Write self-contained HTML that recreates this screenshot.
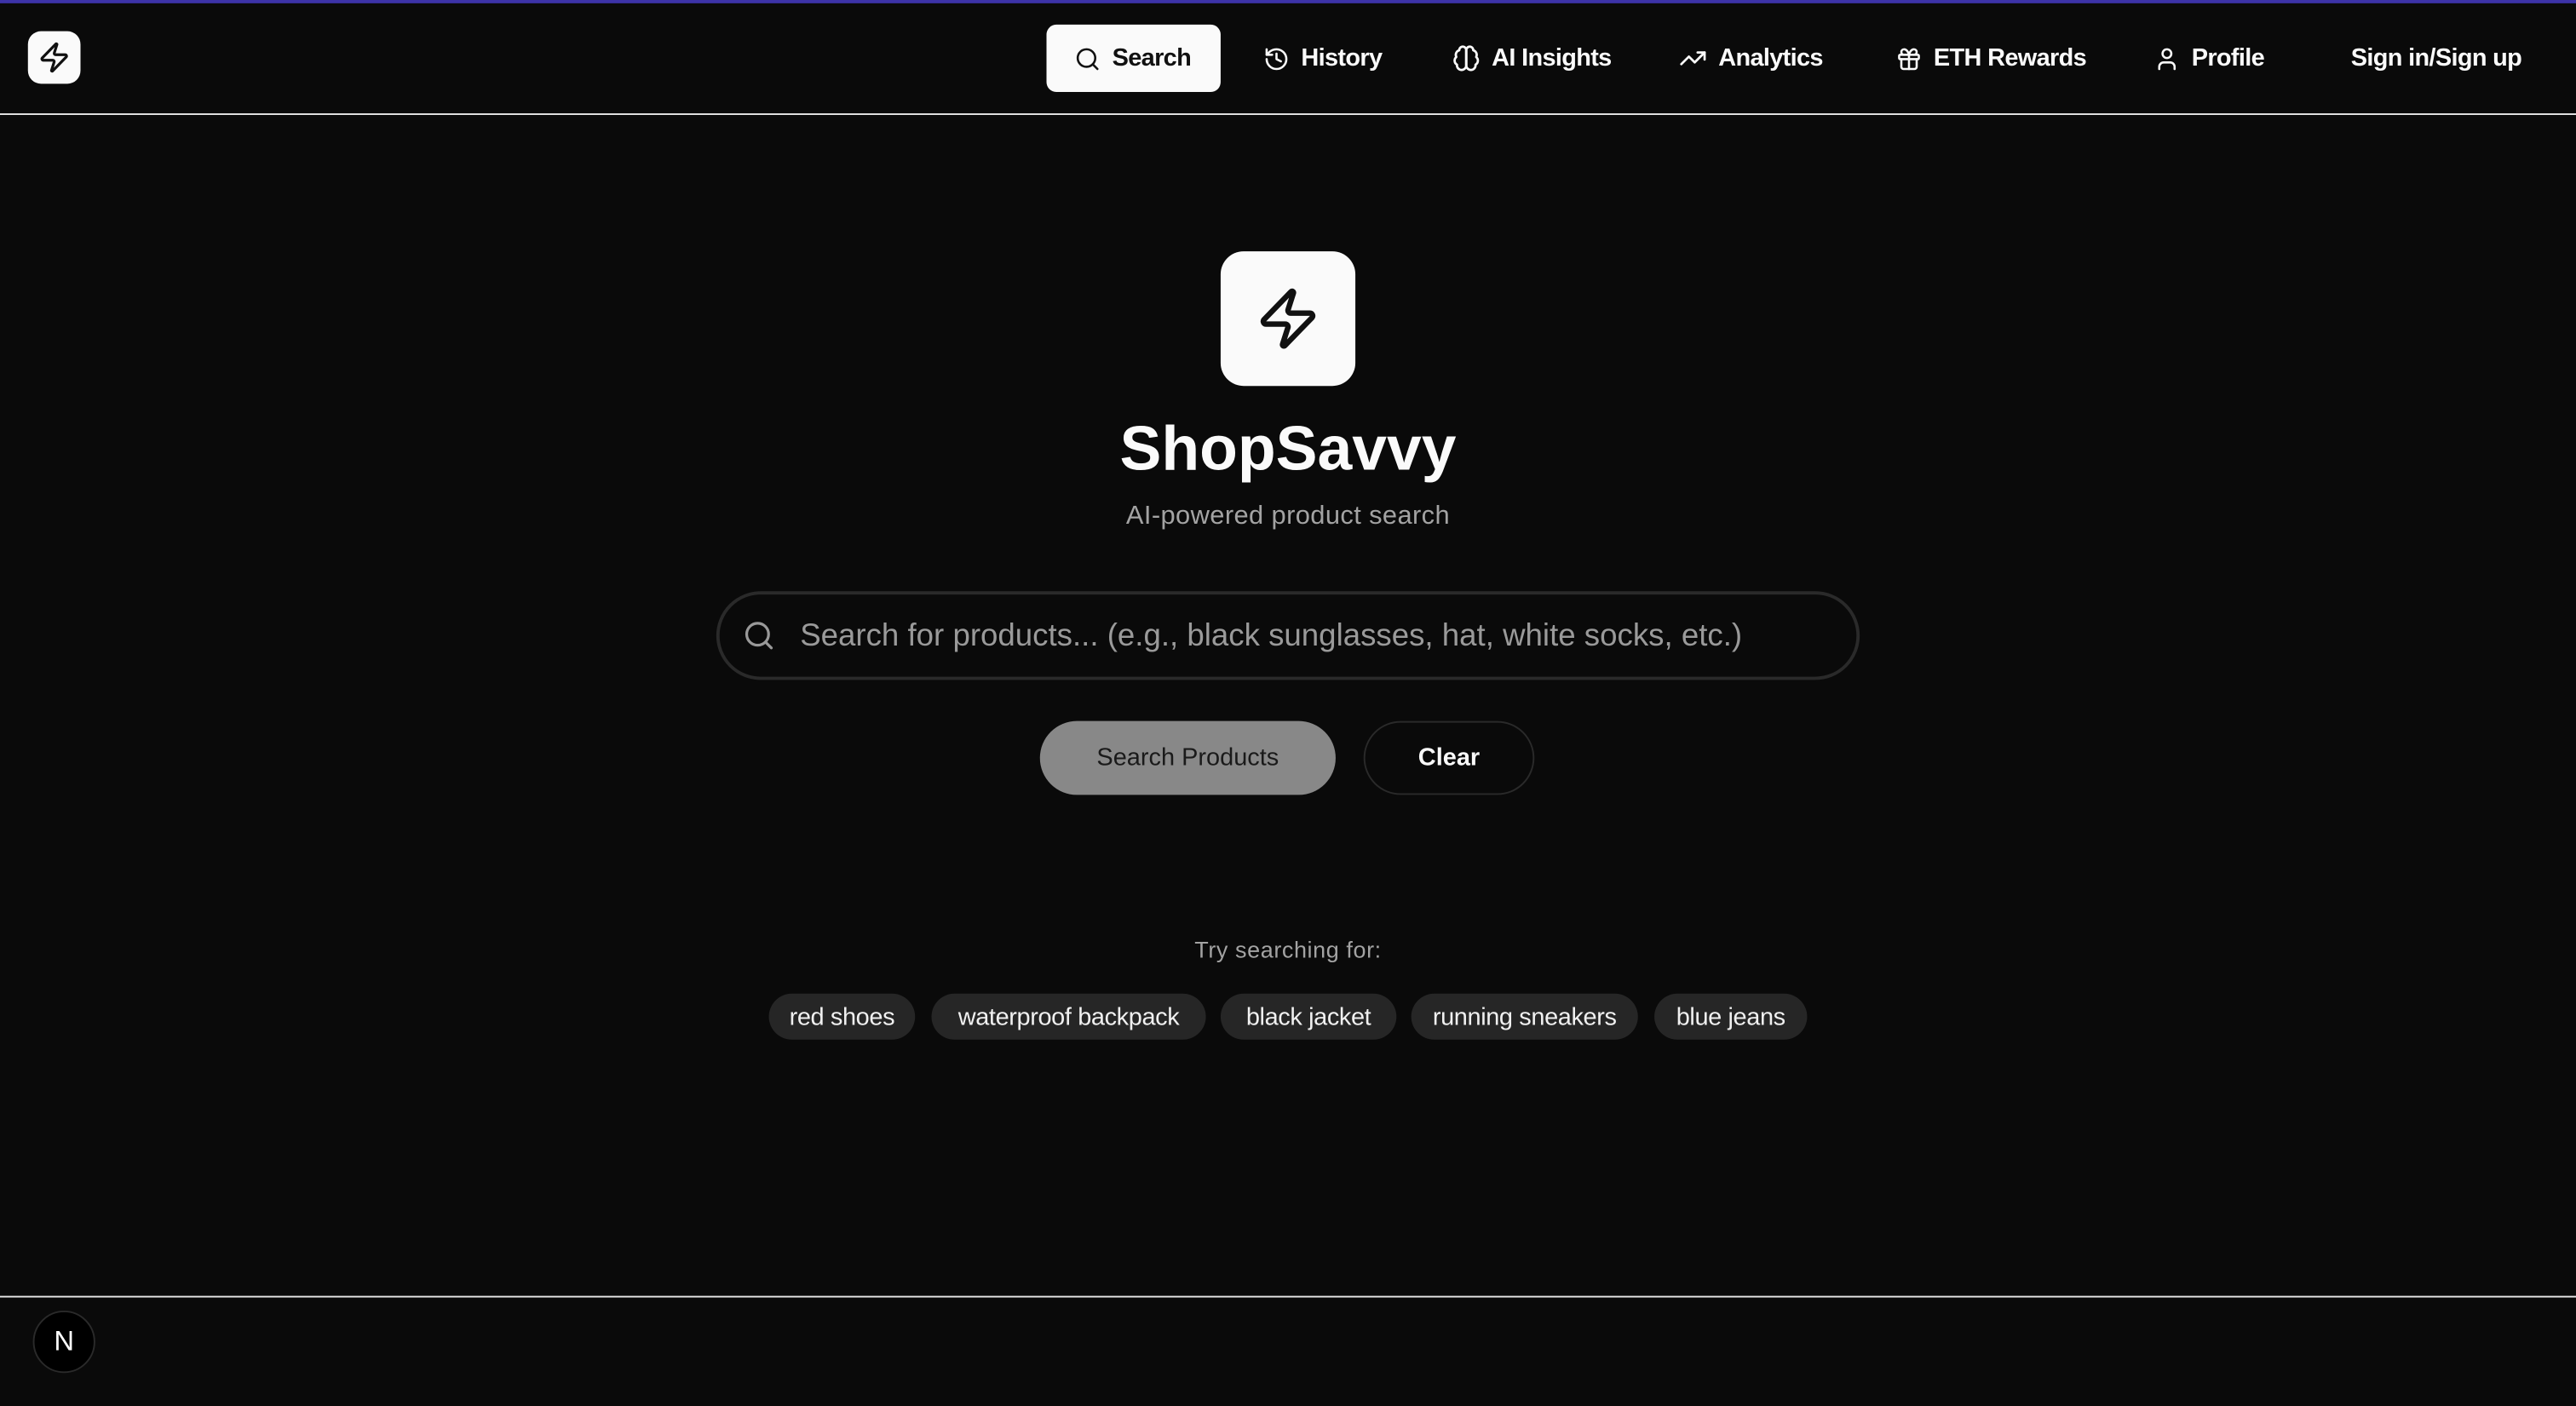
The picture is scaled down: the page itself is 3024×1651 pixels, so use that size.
<!DOCTYPE html>
<html><head><meta charset="utf-8"><style>
*{margin:0;padding:0;box-sizing:border-box}
html,body{width:3024px;height:1650px;background:#0a0a0a;overflow:hidden}
#w{position:absolute;left:0;top:0;width:1568px;height:856px;transform:scale(1.928571);transform-origin:0 0;font-family:"Liberation Sans",sans-serif;color:#fafafa}
.a{position:absolute}
.nav{position:absolute;top:27px;font-size:15px;font-weight:bold;color:#fafafa;display:flex;align-items:center;letter-spacing:-0.35px}
.nav svg{margin-right:7px}
svg{display:block}
.chip{position:absolute;top:605px;height:28px;border-radius:14px;background:#262626;font-size:15px;line-height:29px;text-align:center;color:#f0f0f0;letter-spacing:-0.2px}
</style></head><body><div id="w">
<div class="a" style="left:0;top:0;width:1568px;height:2px;background:#3d33a8"></div>
<div class="a" style="left:0;top:68.5px;width:1568px;height:1.2px;background:#e6e6e6"></div>
<div class="a" style="left:17px;top:19px;width:32px;height:32px;border-radius:8px;background:#fafafa">
<svg style="margin:6px" width="20" height="20" viewBox="0 0 24 24" fill="none" stroke="#111" stroke-width="2" stroke-linecap="round" stroke-linejoin="round"><path d="M4 14a1 1 0 0 1-.78-1.63l9.9-10.2a.5.5 0 0 1 .86.46l-1.92 6.02A1 1 0 0 0 13 10h7a1 1 0 0 1 .78 1.63l-9.9 10.2a.5.5 0 0 1-.86-.46l1.92-6.02A1 1 0 0 0 11 14z"/></svg></div>

<div class="a" style="left:637px;top:15px;width:106px;height:41px;border-radius:6px;background:#fafafa"></div>
<div class="nav" style="left:654px;color:#111"><svg width="16" height="16" viewBox="0 0 24 24" fill="none" stroke="#111" stroke-width="2" stroke-linecap="round"><circle cx="11" cy="11" r="8"/><path d="m21 21-4.3-4.3"/></svg>Search</div>
<div class="nav" style="left:769px"><svg width="16" height="16" viewBox="0 0 24 24" fill="none" stroke="#fafafa" stroke-width="2" stroke-linecap="round" stroke-linejoin="round"><path d="M3 12a9 9 0 1 0 9-9 9.75 9.75 0 0 0-6.74 2.74L3 8"/><path d="M3 3v5h5"/><path d="M12 7v5l4 2"/></svg>History</div>
<div class="nav" style="left:884px"><svg width="17" height="17" viewBox="0 0 24 24" fill="none" stroke="#fafafa" stroke-width="2" stroke-linecap="round" stroke-linejoin="round"><path d="M12 5a3 3 0 1 0-5.997.125 4 4 0 0 0-2.526 5.77 4 4 0 0 0 .556 6.588A4 4 0 1 0 12 18Z"/><path d="M12 5a3 3 0 1 1 5.997.125 4 4 0 0 1 2.526 5.77 4 4 0 0 1-.556 6.588A4 4 0 1 1 12 18Z"/><path d="M12 5v13"/></svg>AI Insights</div>
<div class="nav" style="left:1022px"><svg width="17" height="17" viewBox="0 0 24 24" fill="none" stroke="#fafafa" stroke-width="2" stroke-linecap="round" stroke-linejoin="round"><path d="m22 7-8.5 8.5-5-5L2 17"/><path d="M16 7h6v6"/></svg>Analytics</div>
<div class="nav" style="left:1154px"><svg width="16" height="16" viewBox="0 0 24 24" fill="none" stroke="#fafafa" stroke-width="2" stroke-linecap="round" stroke-linejoin="round"><rect x="3" y="8" width="18" height="4" rx="1"/><path d="M12 8v13"/><path d="M19 12v7a2 2 0 0 1-2 2H7a2 2 0 0 1-2-2v-7"/><path d="M7.5 8a2.5 2.5 0 0 1 0-5A4.8 8 0 0 1 12 8a4.8 8 0 0 1 4.5-5 2.5 2.5 0 0 1 0 5"/></svg>ETH Rewards</div>
<div class="nav" style="left:1311px"><svg width="16" height="16" viewBox="0 0 24 24" fill="none" stroke="#fafafa" stroke-width="2" stroke-linecap="round"><circle cx="12" cy="7" r="4"/><path d="M19 21v-2a4 4 0 0 0-4-4H9a4 4 0 0 0-4 4v2"/></svg>Profile</div>
<div class="nav" style="left:1431px">Sign in/Sign up</div>

<div class="a" style="left:743px;top:153px;width:82px;height:82px;border-radius:14px;background:#fafafa">
<svg style="margin:21px" width="40" height="40" viewBox="0 0 24 24" fill="none" stroke="#111" stroke-width="2" stroke-linecap="round" stroke-linejoin="round"><path d="M4 14a1 1 0 0 1-.78-1.63l9.9-10.2a.5.5 0 0 1 .86.46l-1.92 6.02A1 1 0 0 0 13 10h7a1 1 0 0 1 .78 1.63l-9.9 10.2a.5.5 0 0 1-.86-.46l1.92-6.02A1 1 0 0 0 11 14z"/></svg></div>
<div class="a" style="left:0;width:1568px;top:251px;text-align:center;font-size:38px;font-weight:bold;line-height:46px">ShopSavvy</div>
<div class="a" style="left:0;width:1568px;top:305px;text-align:center;font-size:16px;color:#a3a3a3;line-height:20px;letter-spacing:0.2px">AI-powered product search</div>

<div class="a" style="left:436px;top:360px;width:696px;height:54px;border-radius:27px;border:2px solid #2a2a2a"></div>
<svg class="a" style="left:452px;top:377px" width="20" height="20" viewBox="0 0 24 24" fill="none" stroke="#999" stroke-width="2" stroke-linecap="round"><circle cx="11" cy="11" r="8"/><path d="m21 21-4.3-4.3"/></svg>
<div class="a" style="left:487px;top:376px;font-size:19px;color:#9a9a9a;line-height:24px;letter-spacing:0px">Search for products... (e.g., black sunglasses, hat, white socks, etc.)</div>

<div class="a" style="left:633px;top:439px;width:180px;height:45px;border-radius:23px;background:#888;color:#1a1a1a;font-size:15px;line-height:46px;text-align:center">Search Products</div>
<div class="a" style="left:830px;top:439px;width:104px;height:45px;border-radius:23px;border:1px solid #2a2a2a;color:#fafafa;font-size:15px;font-weight:bold;line-height:44px;text-align:center">Clear</div>

<div class="a" style="left:0;width:1568px;top:569px;text-align:center;font-size:14px;color:#a3a3a3;line-height:18px;letter-spacing:0.3px">Try searching for:</div>
<div class="chip" style="left:468px;width:89px">red shoes</div>
<div class="chip" style="left:567px;width:167px">waterproof backpack</div>
<div class="chip" style="left:743px;width:107px">black jacket</div>
<div class="chip" style="left:859px;width:138px">running sneakers</div>
<div class="chip" style="left:1007px;width:93px">blue jeans</div>

<div class="a" style="left:0;top:788.5px;width:1568px;height:1.2px;background:#e6e6e6"></div>
<div class="a" style="left:20px;top:798px;width:38px;height:38px;border-radius:50%;background:#000;border:1.5px solid #2a2a2a;color:#fff;font-size:17px;line-height:35px;text-align:center">N</div>
</div></body></html>
